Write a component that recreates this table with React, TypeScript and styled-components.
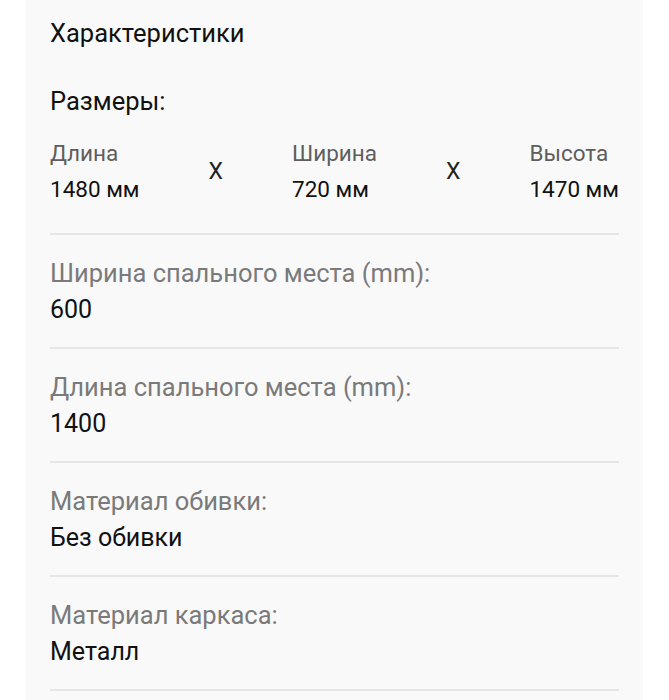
import styled, { createGlobalStyle } from 'styled-components';

const GlobalStyle = createGlobalStyle`
    body {
        margin: 0;
        background: #ffffff;
        font-family: Roboto, "Noto Sans", sans-serif;
        -webkit-font-smoothing: antialiased;
    }
`;

const Card = styled.div`
    margin: 0 26px;
    min-height: 700px;
    background: #f9f9f9;
    padding: 19px 24px 0;
    box-sizing: border-box;
`;

const Title = styled.div`
    font-size: 25.5px;
    line-height: 28px;
    color: #111;
`;

const SubTitle = styled.div`
    margin-top: 40px;
    font-size: 25.5px;
    line-height: 28px;
    color: #111;
`;

const DimsRow = styled.div`
    display: flex;
    justify-content: space-between;
    align-items: center;
    margin-top: 24px;
    padding-bottom: 30px;
    border-bottom: 2px solid #e6e6e6;
`;

const DimCol = styled.div`
    display: flex;
    flex-direction: column;
    gap: 8px;
`;

const DimLabel = styled.div`
    font-size: 22.5px;
    line-height: 28px;
    color: #5e5e5e;
`;

const DimValue = styled.div`
    font-size: 22.5px;
    line-height: 28px;
    color: #111;
`;

const Times = styled.div`
    font-size: 23px;
    line-height: 28px;
    color: #222;
    margin-top: 2px;
`;

const Section = styled.div`
    padding: 24px 0 23px;
    border-bottom: 2px solid #e6e6e6;
`;

const Label = styled.div`
    font-size: 25.5px;
    line-height: 28px;
    color: #7a7a7a;
`;

const Value = styled.div`
    margin-top: 9px;
    font-size: 25px;
    line-height: 28px;
    color: #111;
`;

const dims = [
    { label: 'Длина', value: '1480 мм' },
    { label: 'Ширина', value: '720 мм' },
    { label: 'Высота', value: '1470 мм' },
];

const specs = [
    { label: 'Ширина спального места (mm):', value: '600' },
    { label: 'Длина спального места (mm):', value: '1400' },
    { label: 'Материал обивки:', value: 'Без обивки' },
    { label: 'Материал каркаса:', value: 'Металл' },
];

export default function App() {
    return (
        <>
            <GlobalStyle />
            <Card>
                <Title>Характеристики</Title>
                <SubTitle>Размеры:</SubTitle>
                <DimsRow>
                    {dims.map((d, i) => (
                        <>
                            {i > 0 && <Times key={'x' + i}>X</Times>}
                            <DimCol key={d.label}>
                                <DimLabel>{d.label}</DimLabel>
                                <DimValue>{d.value}</DimValue>
                            </DimCol>
                        </>
                    ))}
                </DimsRow>
                {specs.map((s) => (
                    <Section key={s.label}>
                        <Label>{s.label}</Label>
                        <Value>{s.value}</Value>
                    </Section>
                ))}
            </Card>
        </>
    );
}
